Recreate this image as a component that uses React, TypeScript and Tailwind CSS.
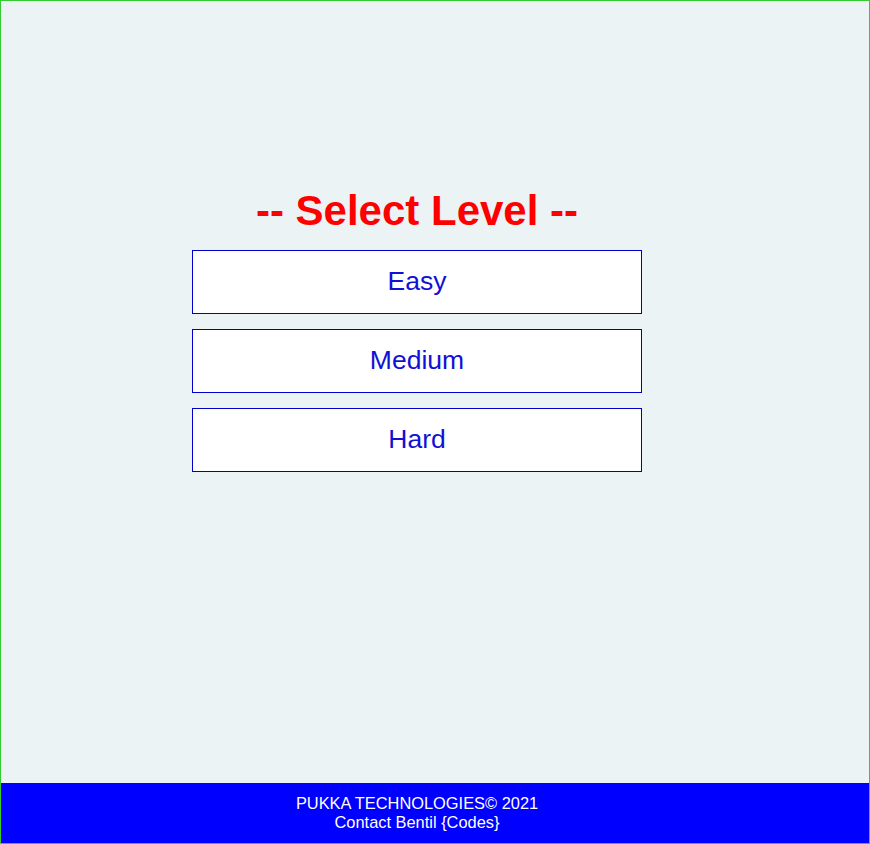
import React from "react";

export default function App() {
  const levels = ["Easy", "Medium", "Hard"];
  return (
    <div
      className="flex h-[844px] w-[870px] flex-col border border-[#33cc33] bg-[#ecf3f5]"
      style={{ fontFamily: '"Liberation Sans", Arial, sans-serif' }}
    >
      <main className="flex flex-1 flex-col items-center pr-[36px] pt-[186px]">
        <h1 className="text-[42px] font-bold leading-[48px] text-[#ff0000]">-- Select Level --</h1>
        <div className="mt-[15px] flex flex-col gap-[15px]">
          {levels.map((l) => (
            <button
              key={l}
              className="flex h-[64px] w-[450px] items-center justify-center border border-[#0000cc] bg-white pb-[3px] text-[26.5px] leading-[30px] text-[#1111d6]"
            >
              {l}
            </button>
          ))}
        </div>
      </main>
      <footer className="flex h-[60px] flex-col items-center justify-center bg-[#0000ff] pr-[36px] text-[16.4px] leading-[19px] text-white">
        <div>PUKKA TECHNOLOGIES© 2021</div>
        <div>Contact Bentil {"{Codes}"}</div>
      </footer>
    </div>
  );
}
